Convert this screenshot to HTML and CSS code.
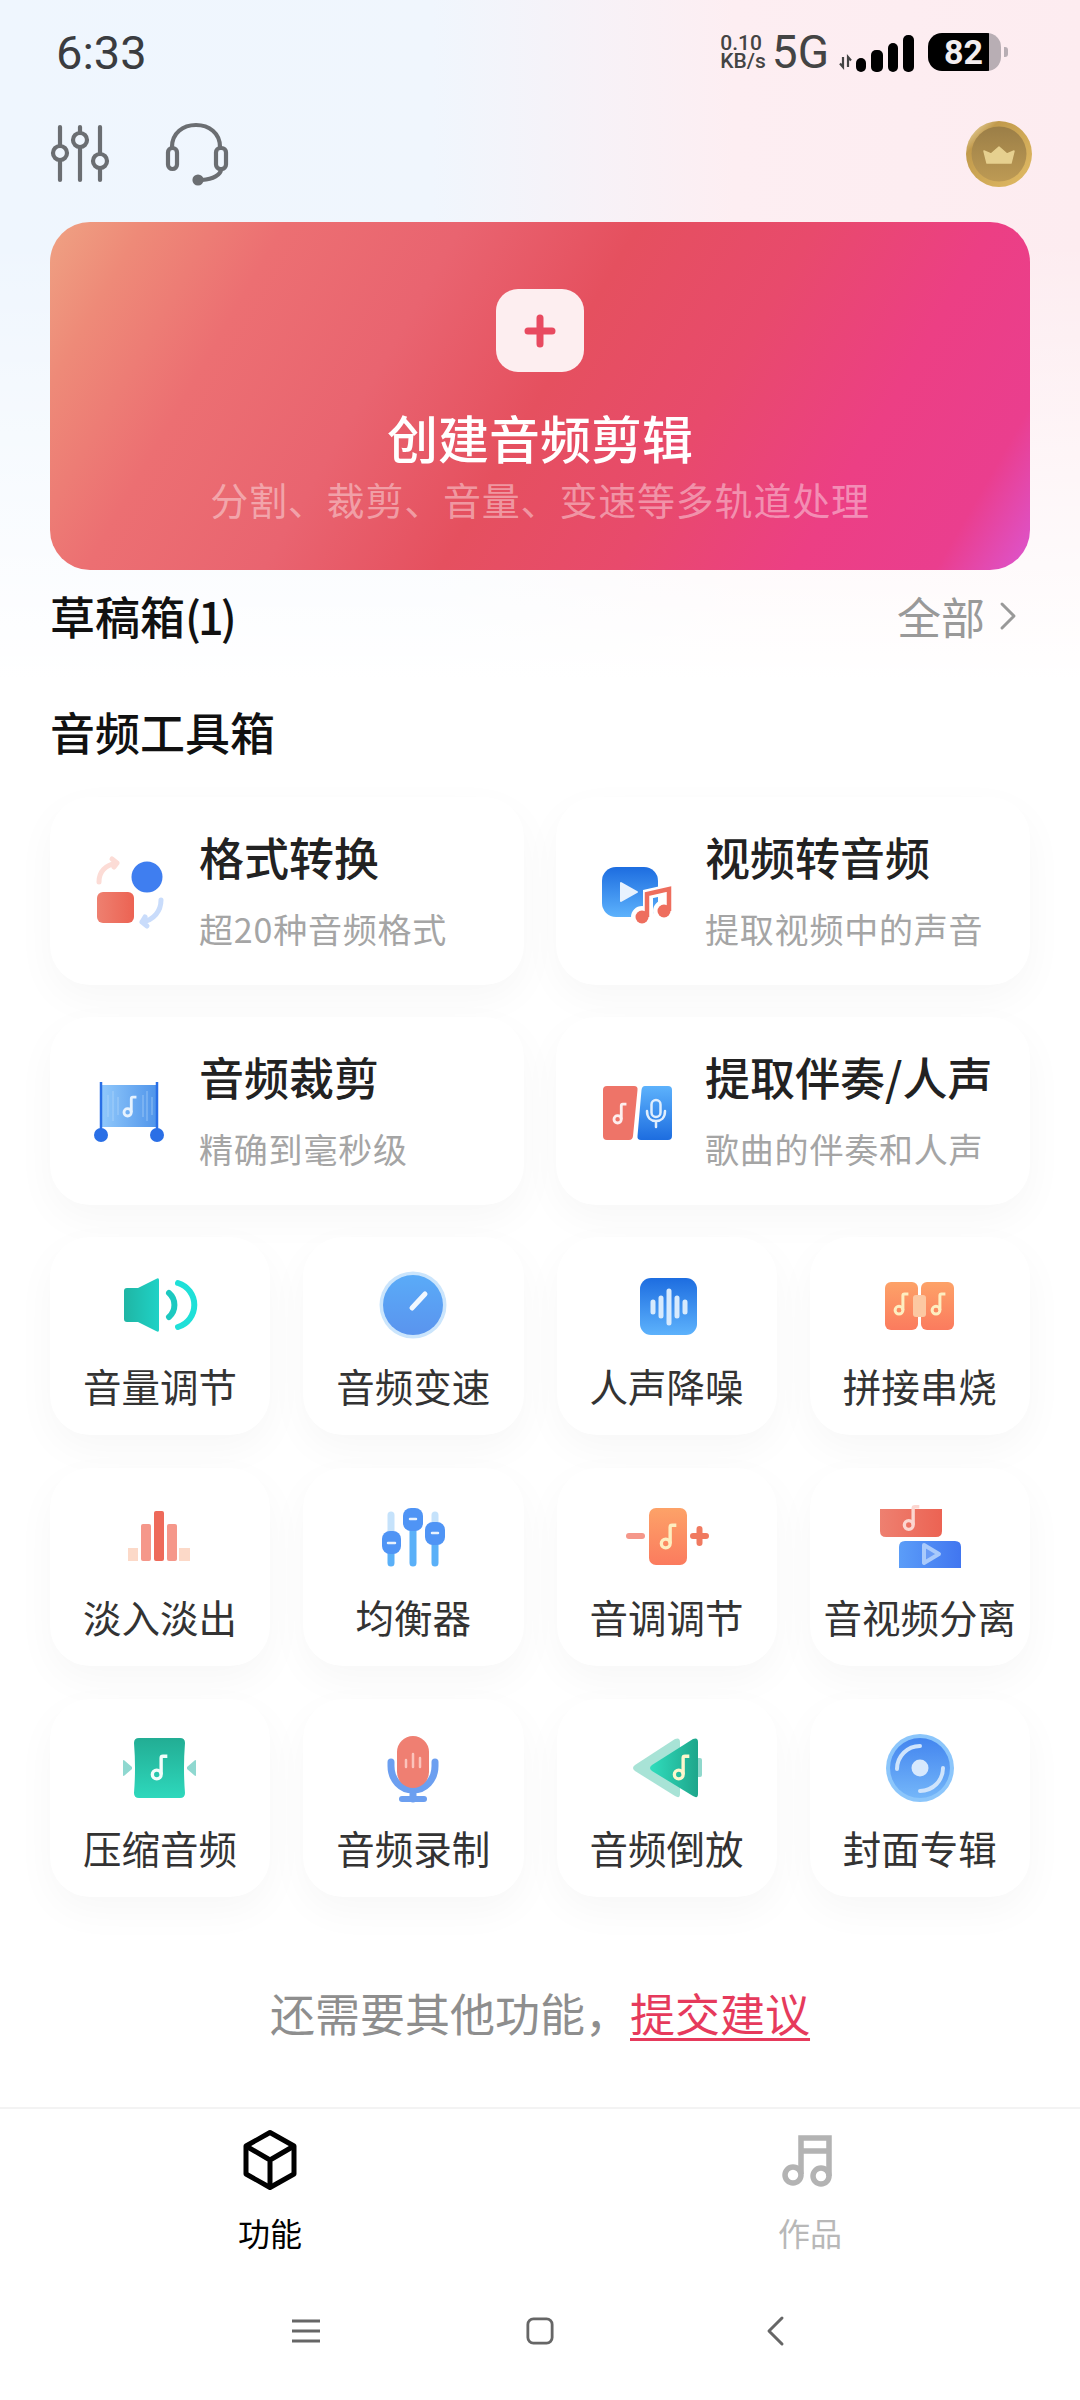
FILE: index.html

```html
<!DOCTYPE html>
<html lang="zh-CN">
<head>
  <meta charset="UTF-8">
  <meta name="viewport" content="width=device-width, initial-scale=1.0">
  <title>音频剪辑</title>
  <link rel="stylesheet" href="styles.css">
</head>
<body>
  <svg class="defs" aria-hidden="true">
    <defs>
      <linearGradient id="blueDown" x1="0" y1="0" x2="0" y2="1"><stop offset="0" stop-color="#1d6de0"/><stop offset="1" stop-color="#5db2fc"/></linearGradient>
      <linearGradient id="blueUp" x1="0" y1="0" x2="0" y2="1"><stop offset="0" stop-color="#5db2fc"/><stop offset="1" stop-color="#1d6de0"/></linearGradient>
      <linearGradient id="blueSoft" x1="0" y1="0" x2="0" y2="1"><stop offset="0" stop-color="#5aabf8"/><stop offset="1" stop-color="#5a94ee"/></linearGradient>
      <linearGradient id="blueSide" x1="0" y1="0" x2="1" y2="0"><stop offset="0" stop-color="#5b9df8"/><stop offset="1" stop-color="#4176f0"/></linearGradient>
      <linearGradient id="trimBlue" x1="0" y1="0" x2="1" y2="0"><stop offset="0" stop-color="#90c8fb"/><stop offset="1" stop-color="#4f94ea"/></linearGradient>
      <linearGradient id="discBlue" x1="0" y1="0" x2="0" y2="1"><stop offset="0" stop-color="#4385ef"/><stop offset="1" stop-color="#74b6f9"/></linearGradient>
      <linearGradient id="orange" x1="0" y1="0" x2="0" y2="1"><stop offset="0" stop-color="#fda268"/><stop offset="1" stop-color="#fb7b5e"/></linearGradient>
      <linearGradient id="redSide" x1="0" y1="0" x2="1" y2="0"><stop offset="0" stop-color="#ee8070"/><stop offset="1" stop-color="#ec6353"/></linearGradient>
      <linearGradient id="tealSide" x1="0" y1="0" x2="1" y2="0"><stop offset="0" stop-color="#1fb5a4"/><stop offset="1" stop-color="#1fd2c6"/></linearGradient>
      <linearGradient id="tealDown" x1="0" y1="0" x2="0" y2="1"><stop offset="0" stop-color="#22ad94"/><stop offset="1" stop-color="#2ed8bc"/></linearGradient>
      <linearGradient id="tealBack" x1="0" y1="0" x2="1" y2="0"><stop offset="0" stop-color="#30ddbd"/><stop offset="1" stop-color="#1ea68b"/></linearGradient>
      <linearGradient id="coinFace" x1="0" y1="0" x2="0" y2="1"><stop offset="0" stop-color="#9b7e47"/><stop offset="1" stop-color="#bd9a54"/></linearGradient>
      <linearGradient id="coinRim" x1="0" y1="0" x2="1" y2="1"><stop offset="0" stop-color="#f8ecc6"/><stop offset="0.25" stop-color="#c19a4c"/><stop offset="1" stop-color="#e3bd66"/></linearGradient>
      <symbol id="note" viewBox="0 0 16 24">
        <circle cx="6" cy="18.2" r="3.9" fill="none" stroke="currentColor" stroke-width="3"/>
        <path d="M9.9 18V3.6Q9.9 2 11.5 2H15.4" fill="none" stroke="currentColor" stroke-width="3"/>
      </symbol>
    </defs>
  </svg>

  <div class="page">
    <div class="statusbar">
      <span class="clock">6:33</span>
      <div class="status-right">
        <div class="netspeed">0.10<br>KB/s</div>
        <span class="net5g">5G</span>
        <svg width="78" height="40" viewBox="0 0 78 40">
          <path d="M4 25V35L1 31.500M9 35V25L12 28.500" fill="none" stroke="#444" stroke-width="2.200"/>
          <rect x="17" y="26" width="10" height="14" rx="5" fill="#000"/>
          <rect x="32" y="18" width="12" height="22" rx="5" fill="#000"/>
          <rect x="49" y="11" width="10" height="29" rx="5" fill="#000"/>
          <rect x="64" y="3" width="11" height="37" rx="5" fill="#000"/>
        </svg>
        <div class="battery"><span class="battery-level">82</span></div>
        <div class="battery-tip"></div>
      </div>
    </div>

    <div class="toolbar">
      <div class="toolbar-left">
        <svg width="62" height="60" viewBox="0 0 62 60" fill="none" stroke="#6b6e72" stroke-width="4.200" stroke-linecap="round">
          <path d="M10 4V22M10 37V57M30 4V10M30 25V57M50 4V31M50 46V57"/>
          <circle cx="10" cy="30" r="7"/><circle cx="30" cy="17" r="7"/><circle cx="50" cy="38" r="7"/>
        </svg>
        <svg width="64" height="62" viewBox="0 0 64 62" fill="none" stroke="#6b6e72" stroke-width="4.200" stroke-linecap="round">
          <path d="M7 26V25C7 11 18 3 31 3S55 11 55 25V26"/>
          <rect x="3" y="26" width="9" height="21" rx="4.500"/>
          <rect x="51" y="26" width="10" height="21" rx="4.500"/>
          <path d="M56 47C56 53 48 57 37 58"/>
          <circle cx="33" cy="58" r="3.500" fill="#6b6e72"/>
        </svg>
      </div>
      <svg class="coin" width="66" height="66" viewBox="0 0 66 66">
        <circle cx="33" cy="33" r="33" fill="url(#coinRim)"/>
        <circle cx="33" cy="33" r="27.500" fill="url(#coinFace)"/>
        <path d="M18 30L25 33L33 26L41 33L48 30L45 42H21Z" fill="#e6d08f" stroke="#e6d08f" stroke-width="1.500" stroke-linejoin="round"/>
      </svg>
    </div>

    <div class="hero">
      <div class="hero-add">
        <svg width="32" height="34" viewBox="0 0 32 34" fill="none" stroke="#e84a60" stroke-width="7" stroke-linecap="round"><path d="M16 4V30M4 17H28"/></svg>
      </div>
      <div class="hero-title">创建音频剪辑</div>
      <div class="hero-sub">分割、裁剪、音量、变速等多轨道处理</div>
    </div>

    <div class="section-row">
      <span class="section-title">草稿箱<span class="draft-count">(1)</span></span>
      <span class="more">全部
        <svg width="16" height="28" viewBox="0 0 16 28" fill="none" stroke="#999" stroke-width="3" stroke-linecap="round" stroke-linejoin="round"><path d="M2 2L14 14L2 26"/></svg>
      </span>
    </div>

    <div class="section-title toolbox-title">音频工具箱</div>

    <div class="wide-grid">
      <div class="wide-card">
        <svg width="80" height="80" viewBox="0 0 80 80">
          <path d="M9 31C9 21 15 14 27 12M27 12L22 8M27 12L24 16" fill="none" stroke="#fcdcd6" stroke-width="5" stroke-linecap="round"/>
          <path d="M71 49C71 60 64 69 52 71M52 71L57 75M52 71L55 66" fill="none" stroke="#c9dcfb" stroke-width="5" stroke-linecap="round"/>
          <circle cx="57" cy="26" r="15.500" fill="#3f7ef0"/>
          <rect x="7" y="41" width="37" height="31" rx="6" fill="url(#redSide)"/>
        </svg>
        <div class="wide-text"><div class="wide-name">格式转换</div><div class="wide-desc">超20种音频格式</div></div>
      </div>
      <div class="wide-card">
        <svg width="80" height="80" viewBox="0 0 80 80">
          <rect x="6" y="16" width="56" height="50" rx="14" fill="url(#blueDown)"/>
          <path d="M25 32V50L41 41Z" fill="#e8f2fe" stroke="#e8f2fe" stroke-width="2" stroke-linejoin="round"/>
          <g fill="none" stroke="#fff" stroke-width="10">
            <path d="M52 66V43L74 38V60"/>
            <circle cx="46" cy="66" r="6"/><circle cx="68" cy="60" r="6"/>
          </g>
          <g fill="#ee6e5e">
            <circle cx="46" cy="66" r="6.500"/><circle cx="68" cy="60" r="6.500"/>
          </g>
          <path d="M51 66V43L73 38V60" fill="none" stroke="#ee6e5e" stroke-width="4.500"/>
        </svg>
        <div class="wide-text"><div class="wide-name">视频转音频</div><div class="wide-desc">提取视频中的声音</div></div>
      </div>
      <div class="wide-card">
        <svg width="80" height="80" viewBox="0 0 80 80">
          <rect x="12" y="14" width="55" height="42" fill="url(#trimBlue)"/>
          <path d="M18 24V46M23 20V50M28 26V44M53 24V46M57 20V50M62 26V44" stroke="#b9dbfb" stroke-width="1" opacity=".6"/>
          <path d="M11 11V64M67 11V64" stroke="#2a6fe6" stroke-width="2.500"/>
          <circle cx="11" cy="64" r="7" fill="#2a6fe6"/><circle cx="67" cy="64" r="7" fill="#2a6fe6"/>
          <use href="#note" x="32" y="24" width="15" height="23" color="#e6f2fe"/>
        </svg>
        <div class="wide-text"><div class="wide-name">音频裁剪</div><div class="wide-desc">精确到毫秒级</div></div>
      </div>
      <div class="wide-card">
        <svg width="80" height="80" viewBox="0 0 80 80">
          <path d="M11 15H38Q42 15 41.500 19L37 65Q36.600 69 33 69H11Q7 69 7 65V19Q7 15 11 15Z" fill="#ee7468"/>
          <path d="M49 15H72Q76 15 76 19V65Q76 69 72 69H45Q41 69 41.500 65L45.500 19Q46 15 49 15Z" fill="url(#blueUp)"/>
          <use href="#note" x="16" y="31" width="15" height="23" color="#fdeeee"/>
          <rect x="55.500" y="29" width="9" height="17" rx="4.500" fill="none" stroke="#e0eefd" stroke-width="2.500"/>
          <path d="M51 40C51 47 55 50 60 50S69 47 69 40M60 50V56" fill="none" stroke="#e0eefd" stroke-width="2.500" stroke-linecap="round"/>
        </svg>
        <div class="wide-text"><div class="wide-name">提取伴奏/人声</div><div class="wide-desc">歌曲的伴奏和人声</div></div>
      </div>
    </div>

    <div class="tool-grid">
      <div class="tool-card">
        <svg width="80" height="80" viewBox="0 0 80 80">
          <path d="M7 23H18L36 14Q39 12 39 15V65Q39 68 36 66L18 57H7Q4 57 4 54V26Q4 23 7 23Z" fill="url(#tealSide)"/>
          <path d="M49 28A16 16 0 0 1 49 52" fill="none" stroke="#1cc9c0" stroke-width="6" stroke-linecap="round"/>
          <path d="M58 18A23 23 0 0 1 58 62" fill="none" stroke="#1fe0d8" stroke-width="6" stroke-linecap="round"/>
        </svg>
        <span class="tool-name">音量调节</span>
      </div>
      <div class="tool-card">
        <svg width="80" height="80" viewBox="0 0 80 80">
          <circle cx="40" cy="40" r="33.500" fill="#cbe5fc"/>
          <circle cx="40" cy="40" r="30" fill="url(#blueSoft)"/>
          <path d="M39 43L52 29" stroke="#f2f8ff" stroke-width="5" stroke-linecap="round"/>
        </svg>
        <span class="tool-name">音频变速</span>
      </div>
      <div class="tool-card">
        <svg width="80" height="80" viewBox="0 0 80 80">
          <rect x="13" y="13" width="57" height="57" rx="11" fill="url(#blueDown)"/>
          <path d="M26 37V47M34 33V51M42 26V58M50 33V51M58 37V47" stroke="#d7eafd" stroke-width="5" stroke-linecap="round"/>
        </svg>
        <span class="tool-name">人声降噪</span>
      </div>
      <div class="tool-card">
        <svg width="80" height="80" viewBox="0 0 80 80">
          <rect x="5" y="17" width="33" height="48" rx="6" fill="url(#orange)"/>
          <rect x="41" y="17" width="33" height="48" rx="6" fill="url(#orange)"/>
          <rect x="33" y="30" width="13" height="22" rx="3" fill="#fcc8a2"/>
          <use href="#note" x="13" y="27" width="16" height="24" color="#fdeec0"/>
          <use href="#note" x="50" y="27" width="16" height="24" color="#fdeec0"/>
        </svg>
        <span class="tool-name">拼接串烧</span>
      </div>

      <div class="tool-card">
        <svg width="80" height="80" viewBox="0 -2 80 80">
          <rect x="8" y="50" width="10" height="13" fill="#fcd9c8"/>
          <rect x="21" y="26" width="10" height="37" rx="2" fill="#f5978a"/>
          <rect x="34" y="13" width="10" height="50" rx="2" fill="#ee6a5a"/>
          <rect x="47" y="26" width="10" height="37" rx="2" fill="#f5978a"/>
          <rect x="59" y="50" width="11" height="13" fill="#fcd9c8"/>
        </svg>
        <span class="tool-name">淡入淡出</span>
      </div>
      <div class="tool-card">
        <svg width="80" height="80" viewBox="0 -2 80 80" stroke-linecap="round">
          <path d="M18 17V40M62 17V30" stroke="#c5e2fb" stroke-width="7"/>
          <path d="M18 50V65M40 30V65M62 45V65" stroke="#5ab0f8" stroke-width="7"/>
          <rect x="9" y="33" width="19" height="23" rx="8" fill="#4f94f5"/>
          <rect x="30" y="10" width="20" height="23" rx="8" fill="#4f94f5"/>
          <rect x="52" y="24" width="20" height="23" rx="8" fill="#4f94f5"/>
          <path d="M15 45H22M37 21H43M59 35H65" stroke="#e8f2fe" stroke-width="2.500"/>
        </svg>
        <span class="tool-name">均衡器</span>
      </div>
      <div class="tool-card">
        <svg width="80" height="80" viewBox="0 -2 80 80">
          <path d="M2 38H15" stroke="#f5978a" stroke-width="6" stroke-linecap="round"/>
          <path d="M66 38H79M72.500 31V45" stroke="#f07a60" stroke-width="6" stroke-linecap="round"/>
          <rect x="22" y="10" width="38" height="57" rx="7" fill="url(#orange)"/>
          <use href="#note" x="32" y="25" width="18" height="27" color="#fdeec0"/>
        </svg>
        <span class="tool-name">音调调节</span>
      </div>
      <div class="tool-card">
        <svg width="80" height="80" viewBox="0 -2 80 80">
          <path d="M0 11H62V33Q62 39 56 39H6Q0 39 0 33Z" fill="url(#redSide)"/>
          <path d="M25 43H75Q81 43 81 49V70H19V49Q19 43 25 43Z" fill="url(#blueSide)"/>
          <use href="#note" x="22" y="6" width="18" height="28" color="#fcd6d0"/>
          <path d="M44 47L59 56L44 65Z" fill="#6a9cf6" stroke="#a9cafb" stroke-width="4" stroke-linejoin="round"/>
        </svg>
        <span class="tool-name">音视频分离</span>
      </div>

      <div class="tool-card">
        <svg width="80" height="80" viewBox="0 -1 80 80">
          <path d="M3 33Q3 31 5 33L12 39V41L5 47Q3 49 3 47Z" fill="#8fd8d0"/>
          <path d="M76 33Q76 31 74 33L67 39V41L74 47Q76 49 76 47Z" fill="#8fd8d0"/>
          <path d="M19 10H60Q65 10 65 15Q63 40 65 65Q65 70 60 70H19Q14 70 14 65Q16 40 14 15Q14 10 19 10Z" fill="url(#tealDown)"/>
          <use href="#note" x="30" y="26" width="18" height="27" color="#f2fdfa"/>
        </svg>
        <span class="tool-name">压缩音频</span>
      </div>
      <div class="tool-card">
        <svg width="80" height="80" viewBox="0 -1 80 80">
          <path d="M18 34V38C18 52 28 62 40 62S62 52 62 38V34M40 62V71" fill="none" stroke="#6c9ff0" stroke-width="7" stroke-linecap="round"/>
          <path d="M29 71H51" stroke="#6c9ff0" stroke-width="6" stroke-linecap="round"/>
          <rect x="24" y="8" width="32" height="52" rx="16" fill="#ef7f72"/>
          <path d="M33 32V39M40 26V39M47 30V39" stroke="#fbc4bc" stroke-width="2.500" stroke-linecap="round"/>
        </svg>
        <span class="tool-name">音频录制</span>
      </div>
      <div class="tool-card">
        <svg width="80" height="80" viewBox="0 -1 80 80">
          <rect x="68" y="30" width="7" height="19" rx="2" fill="#8fd8cc"/>
          <path d="M8 37L48 11Q53 9 53 14V66Q53 71 48 68L8 43Q4 40 8 37Z" fill="#a8e3d6"/>
          <path d="M25 37L66 11Q71 9 71 14V66Q71 71 66 68L25 43Q21 40 25 37Z" fill="url(#tealBack)"/>
          <use href="#note" x="45" y="26" width="18" height="27" color="#fdf6cc"/>
        </svg>
        <span class="tool-name">音频倒放</span>
      </div>
      <div class="tool-card">
        <svg width="80" height="80" viewBox="0 -1 80 80">
          <circle cx="40" cy="40" r="34" fill="#8cc6fb"/>
          <circle cx="40" cy="40" r="30" fill="url(#discBlue)"/>
          <circle cx="40" cy="40" r="8.500" fill="#d7e9fd"/>
          <path d="M17 41A23 23 0 0 1 40 18M63 40A23 23 0 0 1 40 63" fill="none" stroke="#cfe4fc" stroke-width="4" stroke-linecap="round"/>
        </svg>
        <span class="tool-name">封面专辑</span>
      </div>
    </div>

    <div class="feedback">还需要其他功能，<a class="feedback-link">提交建议</a></div>

    <div class="tabbar">
      <div class="tab tab-active">
        <svg width="60" height="60" viewBox="0 0 60 60" fill="none" stroke="#000" stroke-width="5" stroke-linejoin="round">
          <path d="M30 2.500L54 16V44L30 57.500L6 44V16Z"/>
          <path d="M6 16L30 30L54 16M30 30V57.500"/>
        </svg>
        <span>功能</span>
      </div>
      <div class="tab">
        <svg width="60" height="60" viewBox="0 0 60 60" fill="none" stroke="#b3b3b3" stroke-width="5.500">
          <path d="M21 44V8H49V46M21 21H49"/>
          <circle cx="13" cy="45" r="8"/><circle cx="41" cy="46" r="8"/>
        </svg>
        <span>作品</span>
      </div>
    </div>

    <div class="sysnav">
      <div class="sysnav-item">
        <svg width="28" height="24" viewBox="0 0 28 24" stroke="#666" stroke-width="3"><path d="M0 2H28M0 12H28M0 22H28"/></svg>
      </div>
      <div class="sysnav-item">
        <svg width="28" height="28" viewBox="0 0 30 30" fill="none" stroke="#666" stroke-width="3"><rect x="2" y="2" width="26" height="26" rx="6"/></svg>
      </div>
      <div class="sysnav-item sysnav-back">
        <svg width="18" height="30" viewBox="0 0 18 30" fill="none" stroke="#666" stroke-width="3" stroke-linecap="round" stroke-linejoin="round"><path d="M16 2L3 15L16 28"/></svg>
      </div>
    </div>
  </div>
</body>
</html>
```

FILE: styles.css

```css
* {
  box-sizing: border-box;
}

html, body {
  margin: 0;
  padding: 0;
}

body {
  width: 1080px;
  height: 2400px;
  overflow: hidden;
  background: #fff;
  font-family: "Noto Sans CJK SC", "Noto Sans", sans-serif;
  color: #222;
}

.defs {
  display: block;
  width: 0;
  height: 0;
}

svg {
  display: block;
  overflow: visible;
  flex-shrink: 0;
}

.page {
  height: 2400px;
  display: flex;
  flex-direction: column;
  padding: 0 50px;
  background:
    linear-gradient(to bottom, rgba(255,255,255,0) 0, rgba(255,255,255,0) 240px, #fff 680px),
    linear-gradient(to right, #eff6fe 0, #f0f6fd 40%, #fdeef2 68%, #fdecf0 100%);
}

/* status bar */
.statusbar {
  height: 104px;
  display: flex;
  align-items: center;
  justify-content: space-between;
  padding: 0 22px 0 6px;
}

.clock {
  font-family: Roboto, sans-serif;
  font-size: 47px;
  color: #3a3c40;
  line-height: 1;
}

.status-right {
  display: flex;
  align-items: center;
}

.netspeed {
  font-family: Roboto, sans-serif;
  font-size: 21px;
  font-weight: 500;
  line-height: 18px;
  color: #444;
  margin-right: 6px;
}

.net5g {
  font-family: Roboto, sans-serif;
  font-size: 46px;
  line-height: 1;
  color: #444;
  margin-right: 10px;
}

.battery {
  width: 73px;
  height: 38px;
  margin-left: 11px;
  border-radius: 14px;
  background: linear-gradient(to right, #000 0, #000 84%, #b8aeb4 84%);
  display: flex;
  align-items: center;
  padding-left: 16px;
}

.battery-level {
  font-family: Roboto, sans-serif;
  font-size: 34px;
  font-weight: 700;
  color: #f3eef0;
  line-height: 1;
}

.battery-tip {
  width: 4px;
  height: 10px;
  margin-left: 3px;
  border-radius: 0 3px 3px 0;
  background: #b8aeb4;
}

/* top icons */
.toolbar {
  height: 98px;
  margin-bottom: 20px;
  display: flex;
  align-items: center;
  justify-content: space-between;
}

.toolbar-left {
  display: flex;
  align-items: center;
  gap: 53px;
}

.coin {
  margin: 2px -2px 0 0;
}

/* create card */
.hero {
  height: 348px;
  border-radius: 40px;
  display: flex;
  flex-direction: column;
  align-items: center;
  padding-top: 67px;
  color: #fff;
  background: linear-gradient(120deg, #efa283 0, #ee8a78 8%, #ec6f72 20%, #e96470 35%, #e5505f 50%, #e84a6c 65%, #ec3f84 80%, #ea3e8e 92%, #dc55d0 100%);
}

.hero-add {
  width: 88px;
  height: 83px;
  border-radius: 22px;
  background: #fdeef0;
  display: flex;
  align-items: center;
  justify-content: center;
}

.hero-title {
  font-size: 51px;
  font-weight: 500;
  line-height: 60px;
  margin-top: 35px;
}

.hero-sub {
  font-size: 38px;
  line-height: 50px;
  margin-top: 7px;
  letter-spacing: .8px;
  color: rgba(255,255,255,.42);
}

/* section headers */
.section-row {
  height: 60px;
  margin-top: 16px;
  display: flex;
  align-items: center;
  justify-content: space-between;
  padding-right: 14px;
}

.section-title {
  font-size: 45px;
  font-weight: 500;
  line-height: 60px;
  color: #111;
}

.draft-count {
  letter-spacing: -3px;
}

.toolbox-title {
  margin-top: 56px;
}

.more {
  display: flex;
  align-items: center;
  gap: 15px;
  font-size: 44px;
  color: #999;
}

/* big cards */
.wide-grid {
  margin-top: 35px;
  display: grid;
  grid-template-columns: 1fr 1fr;
  gap: 32px;
}

.wide-card {
  height: 188px;
  border-radius: 40px;
  background: #fff;
  box-shadow: 0 14px 40px rgba(0,0,0,.035);
  display: flex;
  align-items: center;
  gap: 29px;
  padding-left: 40px;
}

.wide-text {
  padding-bottom: 4px;
}

.wide-name {
  font-size: 45px;
  font-weight: 500;
  line-height: 60px;
  color: #222;
}

.wide-desc {
  font-size: 34px;
  line-height: 46px;
  margin-top: 19px;
  letter-spacing: .8px;
  color: #a5a5a5;
}

/* small tool cards */
.tool-grid {
  margin-top: 32px;
  display: grid;
  grid-template-columns: repeat(4, 1fr);
  gap: 33px;
}

.tool-card {
  height: 198px;
  border-radius: 40px;
  background: #fff;
  box-shadow: 0 14px 40px rgba(0,0,0,.035);
  display: flex;
  flex-direction: column;
  align-items: center;
  padding-top: 28px;
}

.tool-name {
  font-size: 38.5px;
  line-height: 50px;
  margin-top: 15px;
  color: #333;
  white-space: nowrap;
}

/* footer */
.feedback {
  margin-top: 86px;
  font-size: 45px;
  line-height: 60px;
  text-align: center;
  color: #8e8e8e;
}

.feedback-link {
  color: #e63a5c;
  text-decoration: underline;
  text-underline-offset: 6px;
  text-decoration-thickness: 3px;
}

.tabbar {
  margin: 64px -50px 0;
  border-top: 2px solid #f3f3f3;
  display: flex;
  padding-top: 21px;
}

.tab {
  flex: 1;
  display: flex;
  flex-direction: column;
  align-items: center;
  gap: 20px;
  font-size: 32px;
  line-height: 44px;
  color: #b8b8b8;
}

.tab-active {
  color: #000;
}

.sysnav {
  margin-top: 41px;
  height: 72px;
  display: flex;
  justify-content: center;
}

.sysnav-item {
  width: 234px;
  display: flex;
  align-items: center;
  justify-content: center;
}

.sysnav-back {
  padding-left: 2px;
}
```
